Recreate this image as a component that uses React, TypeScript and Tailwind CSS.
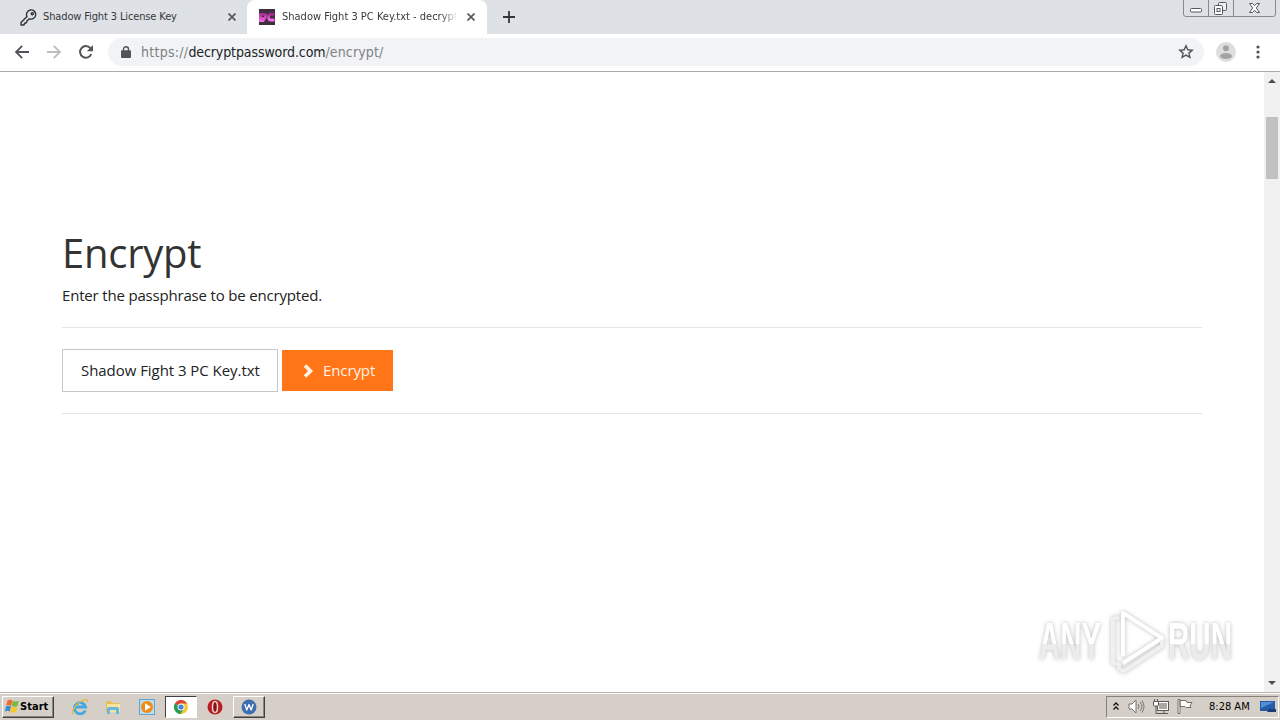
import React from "react";

function KeyIcon() {
  return (
    <svg width="17" height="17" viewBox="0 0 17 17" fill="none" stroke="#303238" strokeWidth="1.4" strokeLinejoin="round">
      <path d="M7 7.6 1 13.4V16h3l.6-1.8 1.8-.4.5-1.8 2.5-2.2a4.6 4.6 0 1 0-2.4-2.2Z" />
      <circle cx="12.3" cy="4.8" r="1.1" />
    </svg>
  );
}

function CloseIcon() {
  return (
    <svg width="8" height="8" viewBox="0 0 8 8" stroke="#55585c" strokeWidth="1.7">
      <path d="M.5.5 7.5 7.5M7.5.5.5 7.5" />
    </svg>
  );
}

function PcIcon() {
  return (
    <svg width="16" height="16" viewBox="0 0 16 16">
      <defs>
        <linearGradient id="pc" x1="0" y1="0" x2="0" y2="1">
          <stop offset="0" stopColor="#a02a8c" />
          <stop offset="1" stopColor="#ff6af2" />
        </linearGradient>
      </defs>
      <path fill="#40303e" d="M0 0h16v16H0z" />
      <path fill="url(#pc)" d="M0 4h5.500Q8 4 8 6.500T6 11L5 13H0Z" />
      <path fill="#40303e" d="M3 6.500h2v1.500H3z" />
      <path fill="none" stroke="url(#pc)" strokeWidth="2.8" d="M15.500 5.200H12q-2.500 0-2.500 2.900T12 11h3.500" />
    </svg>
  );
}

function TabStrip() {
  return (
    <div className="flex h-[34px] bg-[#dee1e6] text-[11px] text-[#35383c]">
      <div className="flex w-[247px] items-center pl-5">
        <KeyIcon />
        <span className="mt-px ml-1.5 w-[185px] whitespace-nowrap tracking-[-0.13px]">Shadow Fight 3 License Key</span>
        <CloseIcon />
      </div>
      <div className="flex w-60 items-center rounded-t-lg bg-white pl-3">
        <PcIcon />
        <span className="mt-px ml-[7px] w-[176px] whitespace-nowrap [mask-image:linear-gradient(to_right,#000_90%,transparent)]">
          Shadow Fight 3 PC Key.txt - decrypt
        </span>
        <span className="ml-[9px]"><CloseIcon /></span>
      </div>
      <svg className="mt-[11px] ml-4" width="12" height="12" viewBox="0 0 12 12" stroke="#333639" strokeWidth="1.8">
        <path d="M6 0v12M0 6h12" />
      </svg>
      <svg className="ml-auto mr-1" width="93" height="18" viewBox="0 0 93 18" fill="none" stroke="#858990">
        <path d="M.5 0v14q0 2.500 2.500 2.500h87q2.500 0 2.500-2.500V0M25.500 0v16M50.500 0v16" />
        <g stroke="#55595f">
          <rect x="7.500" y="8.500" width="11" height="3.500" rx="1" fill="#fff" />
          <rect x="35.500" y="2.500" width="8" height="8" rx="1" fill="#eef0f3" />
          <rect x="31.500" y="5.500" width="8" height="9" rx="1" fill="#fff" />
          <rect x="34" y="8.500" width="3" height="3" />
          <path fill="#fff" d="M66.500 3.500h3l2 2.200 2-2.200h3L73.300 8l3.200 4.500h-3l-2-2.300-2 2.300h-3L69.700 8Z" />
        </g>
      </svg>
    </div>
  );
}

function Toolbar() {
  return (
    <div className="flex h-[38px] items-center border-b border-[#aaa] bg-white pb-px">
      <svg className="ml-[15px]" width="14" height="14" viewBox="0 0 14 14" fill="none" stroke="#505357" strokeWidth="1.8">
        <path d="M14 7H1M7.200.8 1 7l6.200 6.200" />
      </svg>
      <svg className="ml-[18px]" width="14" height="14" viewBox="0 0 14 14" fill="none" stroke="#bbbdc0" strokeWidth="1.8">
        <path d="M0 7h13M6.800.8 13 7l-6.200 6.200" />
      </svg>
      <svg className="ml-[18px]" width="14" height="14" viewBox="0 0 14 14" fill="none" stroke="#505357" strokeWidth="2">
        <path d="M12.300 9A5.800 5.800 0 1 1 11.400 3.200" />
        <path fill="#505357" stroke="none" d="M14 0v6.200H7.800Z" />
      </svg>
      <div className="ml-[15px] flex h-7 w-[1096px] items-center rounded-full bg-[#f1f3f4] pl-[13px] text-[14px] text-[#7d8186]">
        <svg width="10" height="12" viewBox="0 0 10 12">
          <path fill="none" stroke="#505357" strokeWidth="1.400" d="M2.500 5V3.200a2.500 2.500 0 0 1 5 0V5" />
          <rect y="4.300" width="10" height="7.700" rx="1" fill="#505357" />
        </svg>
        <span className="ml-[10px] whitespace-nowrap tracking-[0.15px]">
          <span className="tracking-[0.28px]">https://</span>
          <span className="tracking-[-0.1px] text-[#202327]">decryptpassword.com</span>/encrypt/
        </span>
        <svg className="mr-[10px] ml-auto" width="16" height="16" viewBox="0 0 16 16" fill="none" stroke="#505357" strokeWidth="1.400">
          <path d="m8 1.800 1.800 4 4.400.4-3.300 2.900 1 4.300L8 11.100l-3.900 2.300 1-4.300-3.300-2.900 4.400-.4Z" />
        </svg>
      </div>
      <svg className="ml-3" width="20" height="20" viewBox="0 0 20 20">
        <circle cx="10" cy="10" r="10" fill="#dedede" />
        <circle cx="10" cy="6.200" r="3" fill="#a3a3a3" />
        <ellipse cx="10" cy="14" rx="6" ry="3" fill="#a3a3a3" />
      </svg>
      <svg className="ml-5" width="4" height="14" viewBox="0 0 4 14" fill="#505357">
        <circle cx="2" cy="2" r="1.600" />
        <circle cx="2" cy="7" r="1.600" />
        <circle cx="2" cy="12" r="1.600" />
      </svg>
    </div>
  );
}

function Watermark() {
  return (
    <svg className="absolute right-[34px] bottom-4 [filter:drop-shadow(0_0_2px_#bbb)]" width="210" height="70" viewBox="0 0 210 70">
      <defs>
        <linearGradient id="wm" x1="0" y1="0" x2="0" y2="1">
          <stop offset="0.55" stopColor="#fff" />
          <stop offset="0.55" stopColor="#ececec" />
        </linearGradient>
      </defs>
      <g fill="url(#wm)" fontFamily="Liberation Sans Narrow, Liberation Sans, sans-serif" fontWeight="bold" fontSize="51">
        <text x="3" y="53" textLength="62" lengthAdjust="spacingAndGlyphs">ANY</text>
        <text x="132" y="53" textLength="64" lengthAdjust="spacingAndGlyphs">RUN</text>
      </g>
      <g fill="none" stroke="#fff" strokeWidth="4" strokeLinejoin="round">
        <path d="M87 50V7l39 25-39 25" />
        <path stroke="#f0f0f0" d="M83 11l-6 2v44l5 1M83 57v6l5 2 38-25v-6" />
      </g>
    </svg>
  );
}

function Scrollbar() {
  return (
    <div className="flex w-4 flex-col items-center bg-[#f1f1f1]">
      <svg className="mt-[6px]" width="8" height="5" viewBox="0 0 8 5"><path fill="#505050" d="M0 5 4 1l4 4Z" /></svg>
      <div className="mt-[34px] h-[62px] w-3 bg-[#c1c1c1]" />
      <svg className="mt-auto mb-[6px]" width="8" height="5" viewBox="0 0 8 5"><path fill="#505050" d="M0 0h8L4 4Z" /></svg>
    </div>
  );
}

function EncryptPage() {
  return (
    <main className="relative flex h-[620px] bg-white font-['Open_Sans',sans-serif] text-[#333]">
      <div className="flex-1 pr-[62px] pl-[62px]">
        <h1 className="mt-[159px] text-[40px] leading-[44px] tracking-[-0.25px]">Encrypt</h1>
        <p className="mt-2 text-[15px] leading-6 tracking-[-0.18px] text-[#222]">Enter the passphrase to be encrypted.</p>
        <hr className="mt-5 border-[#e5e5e5]" />
        <form className="my-[21px] flex gap-1" onSubmit={(e) => e.preventDefault()}>
          <input
            className="h-[43px] w-[216px] border border-[#c3c8c8] pr-3 pb-0.5 pl-[18px] text-[15px] tracking-[-0.05px] text-[#222] outline-none"
            defaultValue="Shadow Fight 3 PC Key.txt"
          />
          <button className="mt-px flex h-[41px] w-[111px] items-center bg-[#ff7518] pl-[21px] text-[15px] tracking-[-0.1px] text-[#fff3e6]">
            <svg width="12" height="14" viewBox="0 0 12 14" fill="none" stroke="currentColor" strokeWidth="3.600">
              <path d="m2 1.500 5.500 5.500L2 12.500" />
            </svg>
            <span className="ml-2">Encrypt</span>
          </button>
        </form>
        <hr className="border-[#e5e5e5]" />
      </div>
      <Scrollbar />
      <Watermark />
    </main>
  );
}

function Taskbar() {
  return (
    <footer className="flex h-7 items-center border-t border-[#b9b5ae] bg-[#d5cfc7] text-[11px] text-black shadow-[inset_0_1px_0_#fff]">
      <button className="ml-[2px] flex h-[22px] w-[52px] items-center border border-t-white border-r-[#404040] border-b-[#404040] border-l-white pl-px font-bold shadow-[inset_-1px_-1px_0_#8b8780]">
        <svg width="16" height="15" viewBox="0 0 16 15">
          <path fill="#ef6b2e" d="M3.500 1.500q2.500-1.500 5 0L7.300 6.700q-2.500-1.200-5 0Z" />
          <path fill="#77b943" d="M8.900 1.800q2.600 1.300 5.900 0l-1.300 5.300q-2.800 1.200-5.700 0Z" />
          <path fill="#3c8bd0" d="M2 7.300q2.500-1.200 5 0l-1.200 5.200q-2.500-1.300-5 0Z" />
          <path fill="#f9c72c" d="M7.600 7.700q2.700 1.300 5.700 0L12 13q-2.800 1.300-5.800 0Z" />
        </svg>
        <span className="mt-px tracking-[0.05px]">Start</span>
      </button>
      <svg className="ml-[17px]" width="18" height="18" viewBox="0 0 18 18" fill="none">
        <path stroke="#41a9df" strokeWidth="2.8" d="M14.300 12.500a5.600 5.600 0 1 1 .3-3.500H5" />
        <path stroke="#e7b83e" strokeWidth="1.300" d="M3 15.500C-1 17 3 8 9 4s8-3 7 0" />
      </svg>
      <svg className="ml-[16px]" width="17" height="16" viewBox="0 0 17 16">
        <path fill="#e8bd54" d="M1 2h5l1 2h8v9H1Z" />
        <path fill="#f9e49c" d="M2 5h13v8H2Z" />
        <path fill="#67b7df" d="M2 15V9.500Q2 8 4 8h8q2 0 2 1.500V15h-3v-4H5v4Z" />
      </svg>
      <svg className="ml-[17px]" width="17" height="16" viewBox="0 0 17 16">
        <rect x=".5" y=".5" width="15" height="15" fill="#b9dcf3" stroke="#64a2cc" />
        <circle cx="8" cy="8" r="6" fill="#f28a16" />
        <path fill="#fff" d="m6 4.200 6 3.800-6 3.800Z" />
      </svg>
      <div className="ml-[9px] flex h-[22px] w-8 items-center justify-center border border-t-[#404040] border-r-white border-b-white border-l-[#404040] bg-white">
        <svg width="16" height="16" viewBox="0 0 16 16">
          <circle cx="8" cy="8" r="7" fill="#f6c832" />
          <path fill="#db4437" d="M8 8 1.900 4.500A7 7 0 0 1 14.100 4.500H8Z" />
          <path fill="#259b55" d="M8 8 1.900 4.500A7 7 0 0 0 7.500 15L11 9.700Z" />
          <circle cx="8" cy="8" r="3.500" fill="#fff" />
          <circle cx="8" cy="8" r="2.600" fill="#4285d8" />
        </svg>
      </div>
      <svg className="ml-[10px]" width="16" height="16" viewBox="0 0 16 16">
        <circle cx="8" cy="8" r="7.500" fill="#b91e22" />
        <ellipse cx="8" cy="8" rx="2.500" ry="5.500" fill="#871218" stroke="#f4d4d1" strokeWidth="1.500" />
      </svg>
      <div className="ml-[10px] flex h-[22px] w-8 items-center justify-center border border-t-white border-r-[#404040] border-b-[#404040] border-l-white shadow-[inset_-1px_-1px_0_#8b8780]">
        <svg width="16" height="16" viewBox="0 0 16 16">
          <circle cx="8" cy="8" r="7.500" fill="#3d6fb0" />
          <path fill="none" stroke="#fff" strokeWidth="1.300" strokeLinejoin="round" d="M3.800 5 5.800 11 8 5.500l2.200 5.500 2-6M8 5.500V8" />
        </svg>
      </div>
      <div className="mr-px ml-auto flex h-[22px] w-[173px] items-center border border-t-[#85817b] border-r-white border-b-white border-l-[#85817b]">
        <svg className="ml-[6px]" width="6" height="9" viewBox="0 0 6 9" fill="none" stroke="#111" strokeWidth="1.300">
          <path d="M.5 3.500 3 1l2.500 2.500M.5 7.500 3 5l2.500 2.500" />
        </svg>
        <svg className="ml-[9px]" width="17" height="15" viewBox="0 0 17 15" fill="none" stroke="#77736d">
          <path fill="#fff" d="M1 5h3l4-4v13l-4-4H1Z" />
          <path d="M10 5q2 2.500 0 5M12 3q4 4.500 0 9M14 1.500q4 6 0 12" />
        </svg>
        <svg className="ml-[8px]" width="17" height="16" viewBox="0 0 17 16" fill="none" stroke="#5e5b56">
          <rect x="4.500" y="2.500" width="11" height="9" fill="#fff" />
          <path fill="#aaa7a1" stroke="none" d="M6 4h8v6H6z" />
          <path d="M7 14.500h8M11 12v2" />
          <path fill="#fff" d="M.5 2.500h5V6q0 1-1 1h-3q-1 0-1-1Z" />
          <path d="M1.500 0v2M4.500 0v2M3 7v7.500h4" />
        </svg>
        <svg className="ml-[7px]" width="17" height="15" viewBox="0 0 17 15" fill="#fff" stroke="#716e68">
          <path d="M1 .5h2v14H1ZM3 1.500h6l1 2h5l-2 3 1 2H9l-1-1H3Z" />
        </svg>
        <span className="mt-px ml-[15px] w-[42px] whitespace-nowrap">8:28 AM</span>
        <svg className="ml-[9px]" width="16" height="14" viewBox="0 0 16 14">
          <path fill="#275ba8" d="M0 1h15v10H0Z" />
          <path fill="#4f91d5" d="M1 2h13L1 8Z" />
          <path fill="#173d75" d="M7 12h9V9H9Z" />
        </svg>
      </div>
    </footer>
  );
}

export default function App() {
  return (
    <div className="h-[720px] w-[1280px] overflow-hidden bg-white font-['DejaVu_Sans_Condensed','DejaVu_Sans',sans-serif]">
      <TabStrip />
      <Toolbar />
      <EncryptPage />
      <Taskbar />
    </div>
  );
}
